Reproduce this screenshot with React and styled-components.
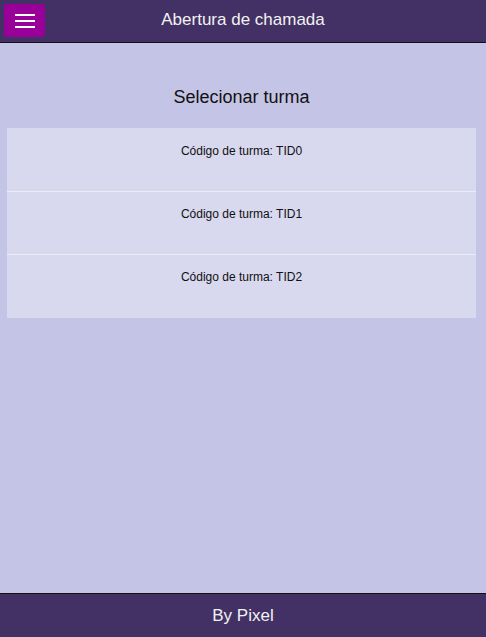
import React from "react";
import styled, { createGlobalStyle } from "styled-components";

const Global = createGlobalStyle`
  html, body { margin: 0; padding: 0; }
  body { font-family: "Liberation Sans", Arial, sans-serif; }
  * { box-sizing: border-box; }
`;

const Page = styled.div`
  display: flex;
  flex-direction: column;
  height: 637px;
  background: #c4c4e6;
`;

const Header = styled.header`
  height: 43px;
  flex: none;
  background: #433165;
  border-bottom: 1px solid #111;
  display: flex;
  align-items: center;
  position: relative;
`;

const MenuButton = styled.button`
  position: absolute;
  left: 4px;
  top: 4px;
  width: 41px;
  height: 33px;
  border: none;
  border-radius: 3px;
  background: #990099;
  display: flex;
  flex-direction: column;
  justify-content: center;
  align-items: center;
  gap: 4px;
  padding: 0;
`;

const Bar = styled.span`
  display: block;
  width: 20px;
  height: 2px;
  background: #fff;
`;

const Title = styled.h1`
  flex: 1;
  margin: 0;
  text-align: center;
  font-size: 17px;
  font-weight: normal;
  color: #f2f2f2;
  padding-bottom: 2px;
`;

const Main = styled.main`
  flex: 1;
  padding: 44px 10px 0 7px;
`;

const Heading = styled.h2`
  margin: 0 0 20px;
  text-align: center;
  font-size: 18px;
  font-weight: normal;
  color: #111;
  line-height: 21px;
`;

const List = styled.ul`
  list-style: none;
  margin: 0;
  padding: 0;
`;

const Item = styled.li`
  height: ${(p) => (p.$last ? "64px" : "63px")};
  background: #d8d8ef;
  border-top: ${(p) => (p.$first ? "none" : "1px solid #ececf6")};
  padding-top: ${(p) => (p.$first ? "16px" : "15px")};
  text-align: center;
  font-size: 12px;
  line-height: 14px;
  color: #111;
`;

const Footer = styled.footer`
  height: 44px;
  flex: none;
  background: #433165;
  border-top: 1px solid #111;
  display: flex;
  align-items: center;
  justify-content: center;
  color: #f2f2f2;
  font-size: 17px;
`;

export default function App() {
  const turmas = ["TID0", "TID1", "TID2"];
  return (
    <>
      <Global />
      <Page>
        <Header>
          <MenuButton aria-label="menu">
            <Bar />
            <Bar />
            <Bar />
          </MenuButton>
          <Title>Abertura de chamada</Title>
        </Header>
        <Main>
          <Heading>Selecionar turma</Heading>
          <List>
            {turmas.map((t, i) => (
              <Item key={t} $first={i === 0} $last={i === turmas.length - 1}>
                Código de turma: {t}
              </Item>
            ))}
          </List>
        </Main>
        <Footer>By Pixel</Footer>
      </Page>
    </>
  );
}
